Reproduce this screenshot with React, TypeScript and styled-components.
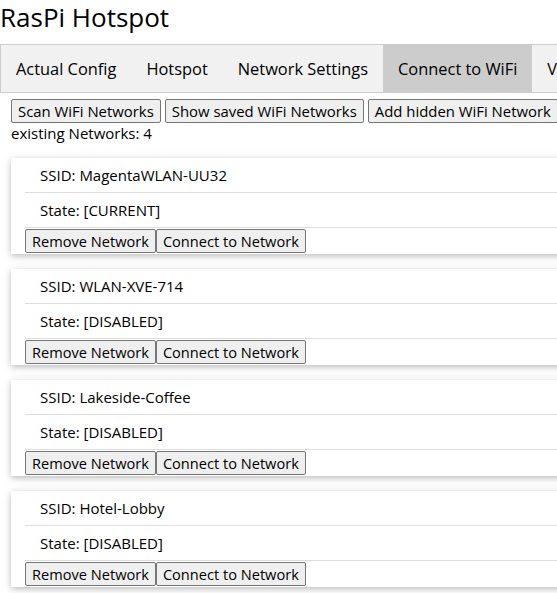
import { FC } from "react";
import styled, { createGlobalStyle } from "styled-components";

const MAIN_FONT = `"Open Sans", "Noto Sans", Arial, sans-serif`;

const GlobalStyle = createGlobalStyle`
html, body {
    margin: 0;
    padding: 0;
    background: #ffffff;
    font-family: ${MAIN_FONT};
    font-size: 15px;
    color: #000000;
}
`;

interface WifiNetwork {
    ssid: string;
    state: string;
}

const NETWORKS: WifiNetwork[] = [
    { ssid: "MagentaWLAN-UU32", state: "[CURRENT]" },
    { ssid: "WLAN-XVE-714", state: "[DISABLED]" },
    { ssid: "Lakeside-Coffee", state: "[DISABLED]" },
    { ssid: "Hotel-Lobby", state: "[DISABLED]" },
];

const TABS = ["Actual Config", "Hotspot", "Network Settings", "Connect to WiFi", "View Logs"];

const Viewport = styled.div`
    width: 100%;
    height: 593px;
    overflow: hidden;
`;

const Page = styled.div`
    width: 640px;
`;

const Title = styled.h1`
    margin: 0 0 10px 0;
    font-family: ${MAIN_FONT};
    font-size: 26px;
    font-weight: 400;
    line-height: 34px;
`;

const TabBar = styled.nav`
    display: flex;
    width: max-content;
    min-width: 640px;
    background-color: #f1f1f1;
    border: 1px solid #cccccc;
`;

const TabItem = styled.div<{ $active?: boolean }>`
    padding: 0 15px;
    height: 47px;
    line-height: 48px;
    font-size: 16.4px;
    white-space: nowrap;
    background-color: ${(p) => (p.$active ? "#cccccc" : "transparent")};
`;

const Content = styled.div`
    padding: 6px 0 0 11px;
`;

const ToolRow = styled.div`
    display: flex;
    gap: 4px;
`;

const Button = styled.button<{ $size?: number }>`
    font-family: ${MAIN_FONT};
    font-size: ${(p) => p.$size ?? 14.6}px;
    color: #000000;
    background-color: #efefef;
    border: 1px solid #767676;
    border-radius: 2px;
    padding: 0 6px;
    height: 24px;
    line-height: 22px;
    white-space: nowrap;
    cursor: pointer;
`;

const Count = styled.div`
    line-height: 20px;
    margin-bottom: 15px;
`;

const Card = styled.div`
    padding-left: 14px;
    margin-bottom: 15px;
    background: #ffffff;
    box-shadow: 0 2px 5px 0 rgba(0, 0, 0, 0.16), 0 2px 10px 0 rgba(0, 0, 0, 0.12);
`;

const InfoList = styled.ul`
    list-style: none;
    margin: 0;
    padding: 0;
`;

const InfoItem = styled.li`
    height: 35px;
    line-height: 35px;
    padding: 0 15px;
    border-bottom: 1px solid #dddddd;
    box-sizing: border-box;
`;

const CardActions = styled.div`
    display: flex;
    height: 26px;
    padding-top: 1px;
    box-sizing: border-box;
`;

const NetworkCard: FC<{ network: WifiNetwork }> = ({ network }) => (
    <Card>
        <InfoList>
            <InfoItem>SSID: {network.ssid}</InfoItem>
            <InfoItem>State: {network.state}</InfoItem>
        </InfoList>
        <CardActions>
            <Button>Remove Network</Button>
            <Button>Connect to Network</Button>
        </CardActions>
    </Card>
);

const App: FC = () => {
    return (
        <Viewport>
            <GlobalStyle />
            <Page>
                <Title>RasPi Hotspot</Title>
                <TabBar>
                    {TABS.map((tab) => (
                        <TabItem key={tab} $active={tab === "Connect to WiFi"}>
                            {tab}
                        </TabItem>
                    ))}
                </TabBar>
                <Content>
                    <ToolRow>
                        <Button $size={14.9}>Scan WiFi Networks</Button>
                        <Button $size={14.9}>Show saved WiFi Networks</Button>
                        <Button $size={14.9}>Add hidden WiFi Network</Button>
                    </ToolRow>
                    <Count>existing Networks: {NETWORKS.length}</Count>
                    {NETWORKS.map((n) => (
                        <NetworkCard key={n.ssid} network={n} />
                    ))}
                </Content>
            </Page>
        </Viewport>
    );
};

export default App;
